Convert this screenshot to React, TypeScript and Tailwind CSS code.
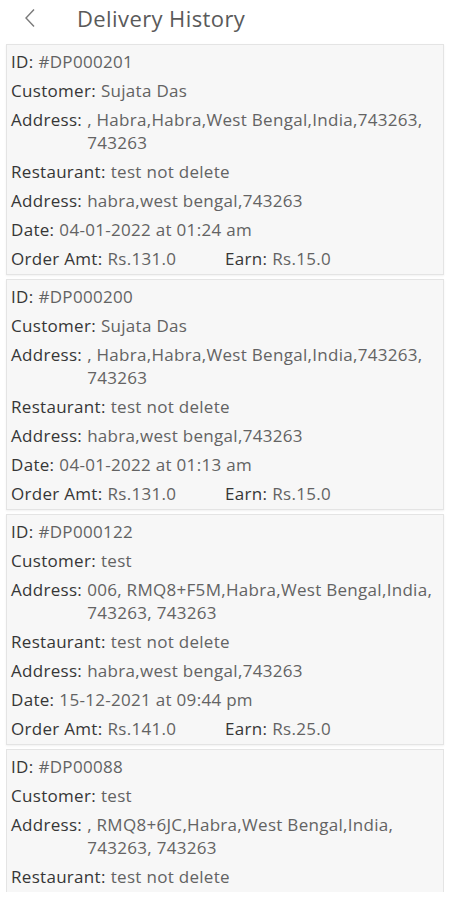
const deliveries = [
  {
    id: "#DP000201",
    customer: "Sujata Das",
    address: ", Habra,Habra,West Bengal,India,743263, 743263",
    restaurant: "test not delete",
    restaurantAddress: "habra,west bengal,743263",
    date: "04-01-2022 at 01:24 am",
    amount: "Rs.131.0",
    earn: "Rs.15.0",
  },
  {
    id: "#DP000200",
    customer: "Sujata Das",
    address: ", Habra,Habra,West Bengal,India,743263, 743263",
    restaurant: "test not delete",
    restaurantAddress: "habra,west bengal,743263",
    date: "04-01-2022 at 01:13 am",
    amount: "Rs.131.0",
    earn: "Rs.15.0",
  },
  {
    id: "#DP000122",
    customer: "test",
    address: "006, RMQ8+F5M,Habra,West Bengal,India, 743263, 743263",
    restaurant: "test not delete",
    restaurantAddress: "habra,west bengal,743263",
    date: "15-12-2021 at 09:44 pm",
    amount: "Rs.141.0",
    earn: "Rs.25.0",
  },
  {
    id: "#DP00088",
    customer: "test",
    address: ", RMQ8+6JC,Habra,West Bengal,India, 743263, 743263",
    restaurant: "test not delete",
    restaurantAddress: "habra,west bengal,743263",
    date: "15-12-2021 at 09:10 pm",
    amount: "Rs.131.0",
    earn: "Rs.15.0",
  },
];

type Delivery = (typeof deliveries)[number];

function Row({ label, value }: { label: string; value: string }) {
  return (
    <div className="flex">
      <span className="shrink-0 pr-[5px] font-medium text-[#363636]">{label}</span>
      <span className="text-[#636363]">{value}</span>
    </div>
  );
}

// last card is cut by the bottom of the screen, only the top rows show
function DeliveryCard({ d, partial }: { d: Delivery; partial?: boolean }) {
  return (
    <div
      className={`flex shrink-0 flex-col gap-[6px] border border-[#e4e4e4] bg-[#f7f7f7] px-[4px] pb-[4px] pt-[5px] shadow-[0_1px_2px_rgba(0,0,0,0.06)] ${
        partial ? "border-b-0 shadow-none" : ""
      }`}
    >
      <Row label="ID:" value={d.id} />
      <Row label="Customer:" value={d.customer} />
      <Row label="Address:" value={d.address} />
      <Row label="Restaurant:" value={d.restaurant} />
      {!partial && (
        <>
          <Row label="Address:" value={d.restaurantAddress} />
          <Row label="Date:" value={d.date} />
          <div className="grid grid-cols-2">
            <Row label="Order Amt:" value={d.amount} />
            <Row label="Earn:" value={d.earn} />
          </div>
        </>
      )}
    </div>
  );
}

export default function App() {
  return (
    <div className="flex min-h-[900px] flex-col bg-white font-['Open_Sans',sans-serif] text-[17px] leading-[23px] tracking-[0.3px]">
      {/* Header */}
      <div className="flex h-[36px] shrink-0 items-center">
        <svg width="12" height="20" viewBox="0 0 12 20" className="ml-[24px]" fill="none">
          <path d="M10 1.5 L2 10 L10 18.5" stroke="#7a7a7a" strokeWidth="1.4" />
        </svg>
        <h1 className="ml-[41px] text-[22px] font-normal tracking-[0.4px] text-[#5a5a5a]">Delivery History</h1>
      </div>

      {/* List */}
      <div className="flex flex-col gap-[4px] px-[6px] pt-[8px]">
        {deliveries.map((d, i) => (
          <DeliveryCard key={d.id} d={d} partial={i === deliveries.length - 1} />
        ))}
      </div>
    </div>
  );
}
